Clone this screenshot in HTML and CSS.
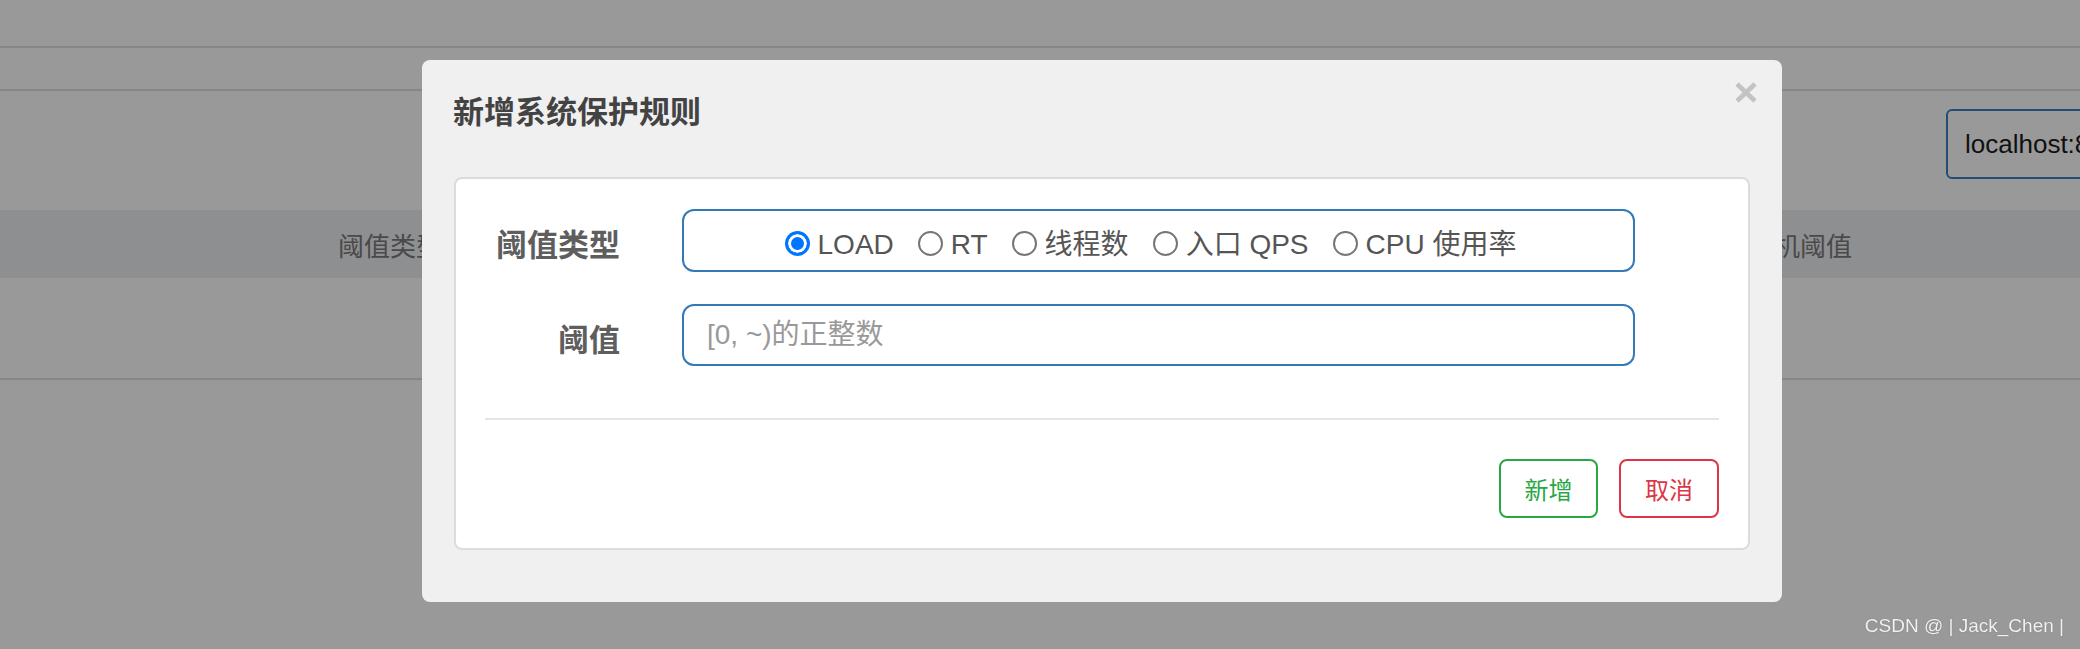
FILE: index.html
```html
<!DOCTYPE html>
<html lang="zh-CN">
<head>
<meta charset="utf-8">
<title>新增系统保护规则</title>
<link rel="stylesheet" href="styles.css">
</head>
<body>
<div class="page">
  <div class="topbar"></div>
  <div class="tabs"></div>
  <div class="toolbar">
    <div class="machine-select">localhost:8719</div>
  </div>
  <div class="table-head">
    <span class="th">阈值类型</span>
    <span class="th">单机阈值</span>
  </div>
  <div class="table-body"></div>
</div>

<div class="overlay"></div>

<div class="modal">
  <button class="close" aria-label="关闭">
    <svg width="22" height="21" viewBox="0 0 22 21"><path d="M2 2 L20 19 M20 2 L2 19" stroke="#c3c3c3" stroke-width="4.6" fill="none"/></svg>
  </button>
  <h4 class="modal-title">新增系统保护规则</h4>
  <div class="panel">
    <div class="form-grid">
      <label class="form-label">阈值类型</label>
      <div class="radio-box">
        <label class="radio-item"><input type="radio" name="type" class="radio" checked><span>LOAD</span></label>
        <label class="radio-item"><input type="radio" name="type" class="radio"><span>RT</span></label>
        <label class="radio-item"><input type="radio" name="type" class="radio"><span>线程数</span></label>
        <label class="radio-item"><input type="radio" name="type" class="radio"><span>入口 QPS</span></label>
        <label class="radio-item"><input type="radio" name="type" class="radio"><span>CPU 使用率</span></label>
      </div>
      <label class="form-label">阈值</label>
      <input class="text-input" type="text" placeholder="[0, ~)的正整数">
    </div>
    <div class="divider"></div>
    <div class="footer">
      <button class="btn btn-add">新增</button>
      <button class="btn btn-cancel">取消</button>
    </div>
  </div>
</div>

<div class="watermark">CSDN @ | Jack_Chen |</div>
</body>
</html>
```

FILE: styles.css
```css
html, body {
  margin: 0;
  padding: 0;
  background: #ffffff;
  overflow: hidden;
  font-family: "Liberation Sans", "Noto Sans CJK SC", sans-serif;
}

.page {
  width: 2080px;
  height: 649px;
  overflow: hidden;
}

.topbar {
  height: 46px;
  border-bottom: 2px solid #dfdfdf;
}

.tabs {
  height: 41px;
  border-bottom: 2px solid #dfdfdf;
}

.toolbar {
  height: 119px;
  display: flex;
  justify-content: flex-end;
  align-items: flex-start;
}

.machine-select {
  box-sizing: border-box;
  margin-top: 18px;
  margin-right: -130px;
  width: 264px;
  height: 70px;
  border: 2px solid #3f7fc0;
  border-radius: 6px;
  padding: 0 17px;
  display: flex;
  align-items: center;
  font-size: 26px;
  color: #1c1c1c;
  white-space: nowrap;
}

.table-head {
  height: 68px;
  background: #edeef2;
  display: flex;
  justify-content: space-between;
  align-items: center;
  padding: 0 228px 0 338px;
}

.th {
  font-size: 26px;
  color: #7a7a7a;
}

.table-body {
  height: 100px;
  border-bottom: 2px solid #dfdfdf;
}

.overlay {
  position: fixed;
  inset: 0;
  background: rgba(0, 0, 0, 0.4);
}

.modal {
  position: fixed;
  left: 422px;
  top: 60px;
  width: 1360px;
  box-sizing: border-box;
  background: #f0f0f0;
  border-radius: 8px;
  padding: 35px 32px 52px 32px;
}

.close {
  position: absolute;
  top: 22px;
  right: 25px;
  width: 22px;
  height: 21px;
  padding: 0;
  border: 0;
  background: none;
  display: block;
}

.close svg {
  display: block;
}

.modal-title {
  margin: 0 0 46px -1px;
  font-size: 31px;
  line-height: 36px;
  font-weight: 700;
  color: #434343;
}

.panel {
  background: #ffffff;
  border: 2px solid #dcdcdc;
  border-radius: 8px;
  padding: 30px 29px 30px 29px;
}

.form-grid {
  display: grid;
  grid-template-columns: 135px 953px;
  column-gap: 62px;
  row-gap: 32px;
  align-items: center;
}

.form-label {
  text-align: right;
  font-size: 31px;
  font-weight: 700;
  color: #5e5e5e;
  padding-top: 11px;
  white-space: nowrap;
  line-height: 36px;
}

.radio-box {
  box-sizing: border-box;
  height: 63px;
  border: 2px solid #337ab7;
  border-radius: 12px;
  display: flex;
  justify-content: center;
  align-items: center;
  gap: 24px;
  padding: 9px 16px 0 0;
}

.radio-item {
  display: inline-flex;
  align-items: center;
  gap: 8px;
  font-size: 28px;
  line-height: 32px;
  color: #555555;
  white-space: nowrap;
}

.radio {
  appearance: none;
  -webkit-appearance: none;
  box-sizing: border-box;
  width: 25px;
  height: 25px;
  margin: 0 0 4px 0;
  border: 2px solid #767676;
  border-radius: 50%;
  background: #ffffff;
  flex: none;
}

.radio:checked {
  border: 3px solid #0075ff;
  background: #0075ff;
  box-shadow: inset 0 0 0 3px #ffffff;
}

.text-input {
  box-sizing: border-box;
  height: 62px;
  width: 953px;
  border: 2px solid #337ab7;
  border-radius: 12px;
  padding: 0 23px;
  font-family: "Liberation Sans", "Noto Sans CJK SC", sans-serif;
  font-size: 28px;
  color: #555555;
  background: #ffffff;
  outline: none;
}

.text-input::placeholder {
  color: #999999;
}

.divider {
  margin-top: 52px;
  height: 2px;
  background: #e5e5e5;
}

.footer {
  margin-top: 39px;
  display: flex;
  justify-content: flex-end;
  gap: 21px;
}

.btn {
  box-sizing: border-box;
  height: 59px;
  background: #ffffff;
  border-radius: 8px;
  font-family: "Noto Sans CJK SC", sans-serif;
  font-size: 24px;
  padding: 0;
}

.btn-add {
  width: 99px;
  border: 2px solid #28a745;
  color: #28a745;
}

.btn-cancel {
  width: 100px;
  border: 2px solid #dc3545;
  color: #dc3545;
}

.watermark {
  position: fixed;
  right: 16px;
  bottom: 12px;
  font-size: 19px;
  color: #f2f2f2;
  text-shadow: 0 0 1px rgba(0, 0, 0, 0.35);
  font-family: "Liberation Sans", "Noto Sans CJK SC", sans-serif;
  white-space: nowrap;
}
```
